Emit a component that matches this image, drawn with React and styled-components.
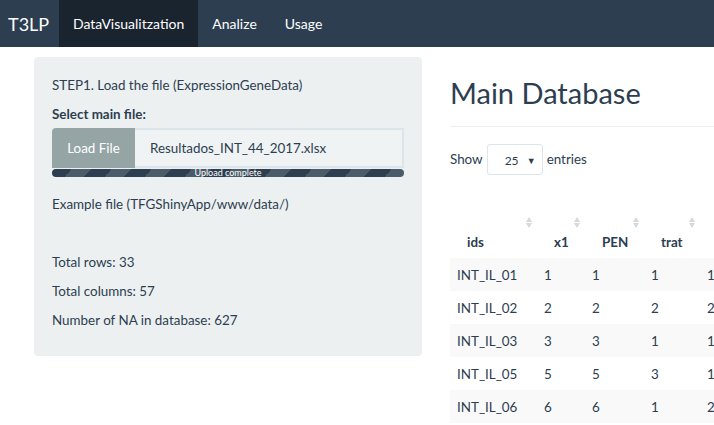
import React from 'react';
import styled, { createGlobalStyle } from 'styled-components';

const GlobalStyle = createGlobalStyle`
  html, body {
    margin: 0;
    padding: 0;
    background: #ffffff;
  }
  body {
    font-family: Lato, "Open Sans", sans-serif;
    font-size: 13.4px;
    color: #2c3e50;
    overflow: hidden;
  }
`;

const Navbar = styled.nav`
  display: flex;
  align-items: stretch;
  height: 47px;
  background: #2c3e50;
`;

const Brand = styled.div`
  display: flex;
  align-items: center;
  width: 51px;
  padding-left: 8px;
  font-size: 18px;
  color: #ffffff;
`;

const NavItem = styled.div`
  display: flex;
  align-items: center;
  padding: 0 14px;
  font-size: 14px;
  color: #ffffff;
  background: ${(p) => (p.$active ? '#1a242f' : 'transparent')};
`;

const Page = styled.div`
  display: flex;
  align-items: flex-start;
  padding: 10px 0 0 34px;
  gap: 28px;
`;

const Well = styled.div`
  flex: 0 0 388px;
  box-sizing: border-box;
  background: #ecf0f1;
  border-radius: 4px;
  padding: 18px 18px 26px 18px;
`;

const Line = styled.div`
  line-height: 20px;
  margin-bottom: ${(p) => p.$mb ?? 9}px;
  font-weight: ${(p) => (p.$bold ? 700 : 400)};
`;

const InputGroup = styled.div`
  display: flex;
  height: 40px;
`;

const FileButton = styled.div`
  display: flex;
  align-items: center;
  justify-content: center;
  width: 83px;
  background: #95a5a6;
  color: #ffffff;
  border-radius: 4px 0 0 0;
`;

const FileName = styled.div`
  flex: 1;
  display: flex;
  align-items: center;
  padding: 0 15px;
  background: #f0f3f4;
  border: 2px solid #dce4ec;
  border-left: none;
`;

const Progress = styled.div`
  margin-top: 1px;
  height: 8px;
  border-radius: 4px;
  background-color: #2c3e50;
  background-image: linear-gradient(
    -45deg,
    rgba(255, 255, 255, 0.15) 25%,
    transparent 25%,
    transparent 50%,
    rgba(255, 255, 255, 0.15) 50%,
    rgba(255, 255, 255, 0.15) 75%,
    transparent 75%,
    transparent
  );
  background-size: 40px 40px;
  color: #ffffff;
  font-size: 9px;
  line-height: 8px;
  text-align: center;
  margin-bottom: 17px;
`;

const Main = styled.div`
  flex: 1;
  min-width: 0;
  overflow: hidden;
`;

const Title = styled.h2`
  margin: 12px 0 0 0;
  font-size: 29px;
  font-weight: 400;
  line-height: 48px;
`;

const Rule = styled.hr`
  border: none;
  border-top: 1px solid #ecf0f1;
  margin: 9px 0 17px 0;
`;

const LengthRow = styled.div`
  display: flex;
  align-items: center;
  gap: 4px;
  height: 30px;
  margin-bottom: 30px;
`;

const SelectBox = styled.div`
  box-sizing: border-box;
  display: flex;
  align-items: center;
  justify-content: space-between;
  width: 56px;
  height: 31px;
  padding: 2px 6px 0 17px;
  border: 1px solid #dce4ec;
  border-radius: 3px;
  font-size: 12px;
  color: #2c3e50;
  span:last-child {
    font-size: 9px;
  }
`;

const Table = styled.table`
  border-collapse: collapse;
  table-layout: fixed;
  width: 400px;
`;

const Th = styled.th`
  position: relative;
  height: 48px;
  padding: 0 0 6px 17px;
  text-align: left;
  vertical-align: bottom;
  font-weight: 700;
  line-height: 20px;
`;

const SortIcon = styled.span`
  position: absolute;
  top: 13px;
  right: 5px;
  display: flex;
  flex-direction: column;
  gap: 1px;
  i {
    width: 0;
    height: 0;
    border-left: 3.5px solid transparent;
    border-right: 3.5px solid transparent;
  }
  i:first-child {
    border-bottom: 5px solid #d5d9dc;
  }
  i:last-child {
    border-top: 5px solid #d5d9dc;
  }
`;

const Tr = styled.tr`
  background: ${(p) => (p.$odd ? '#f9f9f9' : '#ffffff')};
`;

const Td = styled.td`
  height: 33px;
  padding: 0 0 0 7px;
  line-height: 20px;
  white-space: nowrap;
`;

const columns = [
  { name: 'ids', width: 87 },
  { name: 'x1', width: 48 },
  { name: 'PEN', width: 59 },
  { name: 'trat', width: 56 },
  { name: '', width: 150 },
];

const rows = [
  ['INT_IL_01', 1, 1, 1, 1],
  ['INT_IL_02', 2, 2, 2, 2],
  ['INT_IL_03', 3, 3, 1, 1],
  ['INT_IL_05', 5, 5, 3, 1],
  ['INT_IL_06', 6, 6, 1, 2],
];

export default function App() {
  return (
    <>
      <GlobalStyle />
      <Navbar>
        <Brand>T3LP</Brand>
        <NavItem $active>DataVisualitzation</NavItem>
        <NavItem>Analize</NavItem>
        <NavItem>Usage</NavItem>
      </Navbar>
      <Page>
        <Well>
          <Line $mb={9}>STEP1. Load the file (ExpressionGeneData)</Line>
          <Line $bold $mb={4}>Select main file:</Line>
          <InputGroup>
            <FileButton>Load File</FileButton>
            <FileName>Resultados_INT_44_2017.xlsx</FileName>
          </InputGroup>
          <Progress>Upload complete</Progress>
          <Line $mb={38}>Example file (TFGShinyApp/www/data/)</Line>
          <Line>Total rows: 33</Line>
          <Line>Total columns: 57</Line>
          <Line $mb={0}>Number of NA in database: 627</Line>
        </Well>
        <Main>
          <Title>Main Database</Title>
          <Rule />
          <LengthRow>
            Show
            <SelectBox>
              <span>25</span>
              <span>▼</span>
            </SelectBox>
            entries
          </LengthRow>
          <Table>
            <colgroup>
              {columns.map((c, i) => (
                <col key={i} style={{ width: c.width }} />
              ))}
            </colgroup>
            <thead>
              <tr>
                {columns.map((c, i) => (
                  <Th key={i}>
                    {c.name}
                    {c.name && (
                      <SortIcon>
                        <i />
                        <i />
                      </SortIcon>
                    )}
                  </Th>
                ))}
              </tr>
            </thead>
            <tbody>
              {rows.map((r, i) => (
                <Tr key={r[0]} $odd={i % 2 === 0}>
                  {r.map((v, j) => (
                    <Td key={j}>{v}</Td>
                  ))}
                </Tr>
              ))}
            </tbody>
          </Table>
        </Main>
      </Page>
    </>
  );
}
